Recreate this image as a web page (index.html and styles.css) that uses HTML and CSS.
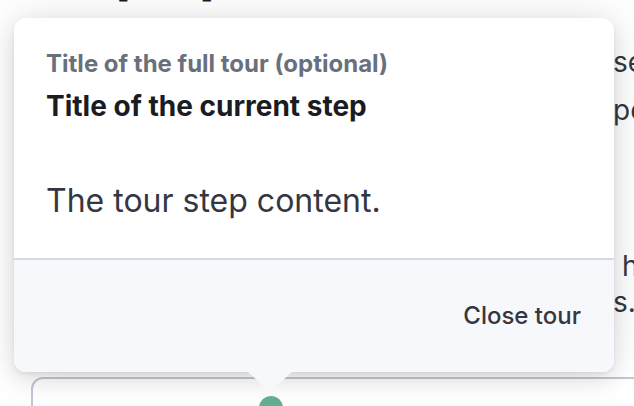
FILE: index.html
```html
<!DOCTYPE html>
<html lang="en">
<head>
<meta charset="utf-8">
<title>Tour step</title>
<link rel="stylesheet" href="styles.css">
</head>
<body>
<div class="page">
  <div class="bg">
    <h1 class="heading">Sample pad</h1>
    <p class="line line-1">see the</p>
    <p class="line line-2">people</p>
    <p class="line line-3">h</p>
    <p class="line line-4">s.</p>
    <div class="box"></div>
  </div>

  <div class="popover" role="dialog">
    <div class="pop-body">
      <div class="subtitle">Title of the full tour (optional)</div>
      <div class="title">Title of the current step</div>
      <div class="content">The tour step content.</div>
    </div>
    <div class="pop-footer">
      <button class="close-btn" type="button">Close tour</button>
    </div>
    <div class="arrow"></div>
  </div>
  <div class="beacon"></div>
</div>
</body>
</html>
```

FILE: styles.css
```css
html, body {
  margin: 0;
  padding: 0;
  background: #ffffff;
}
body {
  width: 634px;
  height: 406px;
  overflow: hidden;
  font-family: Inter, "Noto Sans", sans-serif;
}
.page {
  position: relative;
  width: 634px;
  height: 406px;
  overflow: hidden;
}
.bg {
  display: flex;
  flex-direction: column;
}
.heading {
  margin: -54px 0 0 0;
  padding-left: 12px;
  font-size: 48px;
  line-height: 58px;
  font-weight: 800;
  color: #1a1c21;
  white-space: nowrap;
}
.line {
  margin: 0;
  padding-left: 613px;
  font-size: 28px;
  line-height: 48px;
  color: #343741;
  white-space: nowrap;
}
.line-1 { margin-top: 34px; }
.line-2 { margin-top: 0; }
.line-3 { margin-top: 114px; line-height: 36px; padding-left: 622px; }
.line-4 { margin-top: 0; line-height: 36px; }
.box {
  margin-top: 57px;
  margin-left: 31px;
  width: 700px;
  height: 120px;
  border: 2px solid #c2c7d4;
  border-radius: 12px;
  background: #ffffff;
}

.popover {
  position: absolute;
  left: 14px;
  top: 18px;
  width: 600px;
  background: #ffffff;
  border-radius: 12px;
  box-shadow: 0 0 40px rgba(0, 0, 0, 0.12), 0 8px 20px rgba(0, 0, 0, 0.08), 0 2px 4px rgba(0, 0, 0, 0.06);
}
.pop-body {
  padding: 32px 32px 33px 32px;
  border-bottom: 2px solid #d3dae6;
}
.subtitle {
  font-size: 24px;
  line-height: 28px;
  font-weight: 700;
  color: #69707d;
}
.title {
  margin-top: 8px;
  font-size: 28px;
  line-height: 40px;
  font-weight: 700;
  color: #1a1c21;
}
.content {
  margin-top: 51px;
  font-size: 32px;
  line-height: 48px;
  color: #343741;
}
.pop-footer {
  display: flex;
  justify-content: flex-end;
  padding: 32px 17px 32px 32px;
  background: #f7f8fc;
  border-radius: 0 0 12px 12px;
}
.close-btn {
  height: 48px;
  padding: 0 16px;
  border: none;
  background: transparent;
  font-family: Inter, "Noto Sans", sans-serif;
  font-size: 24px;
  font-weight: 500;
  color: #343741;
  line-height: 48px;
}
.arrow {
  position: absolute;
  left: 234px;
  bottom: -20px;
  width: 0;
  height: 0;
  border-left: 22px solid transparent;
  border-right: 22px solid transparent;
  border-top: 20px solid #f7f8fc;
}
.beacon {
  position: absolute;
  left: 259px;
  top: 396px;
  width: 24px;
  height: 24px;
  border-radius: 50%;
  background: #63ad93;
}
```
